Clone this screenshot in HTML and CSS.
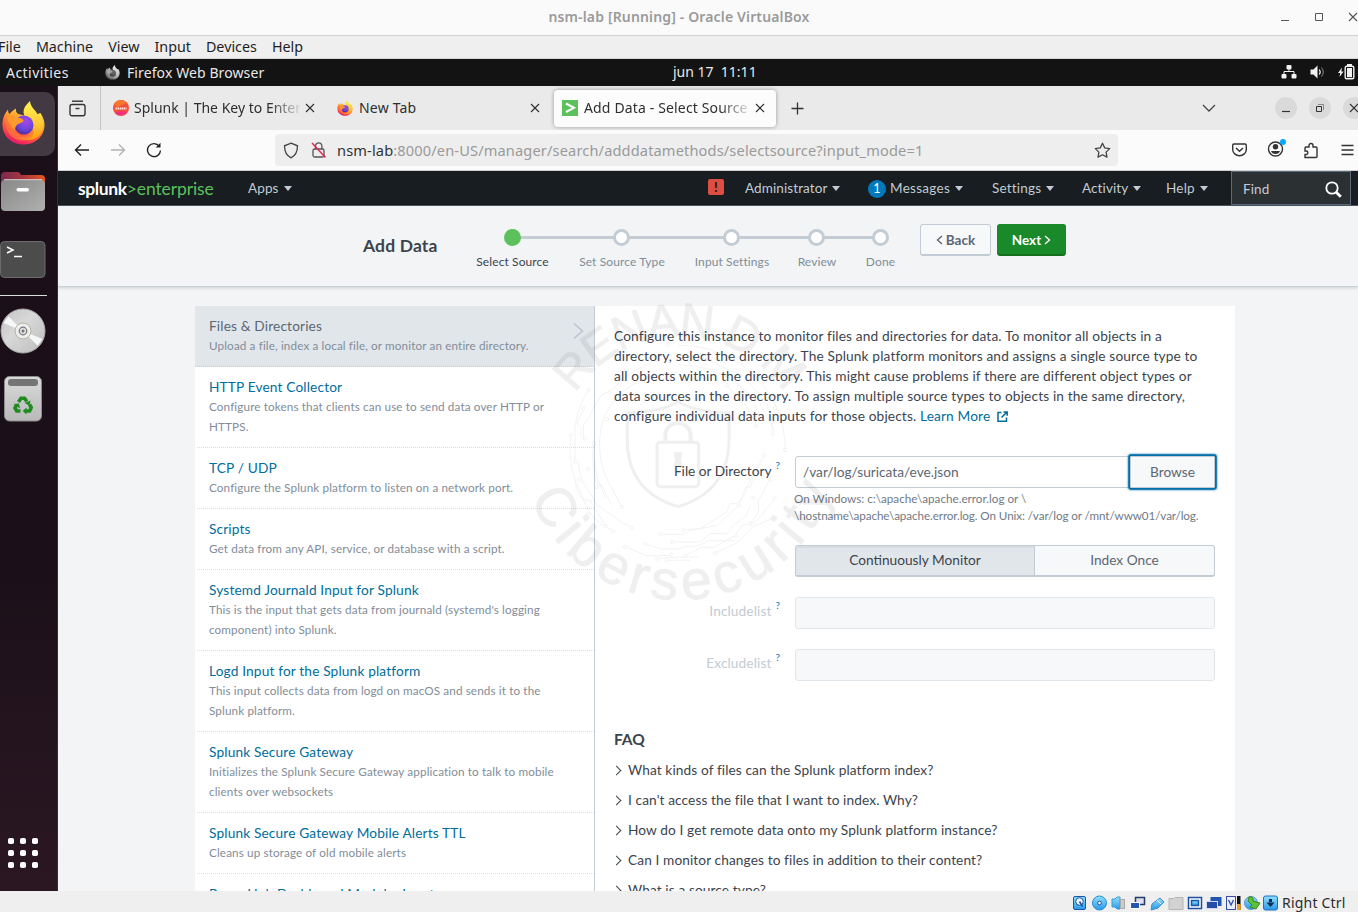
FILE: index.html
```html
<!DOCTYPE html>
<html lang="en">
<head>
<meta charset="utf-8">
<title>nsm-lab [Running] - Oracle VirtualBox</title>
<link rel="stylesheet" href="styles.css">
</head>
<body>
<svg class="defs" width="0" height="0">
  <defs>
    <linearGradient id="fox" x1=".8" y1="0" x2=".3" y2="1"><stop offset="0" stop-color="#fff44f"/><stop offset=".35" stop-color="#ffa72e"/><stop offset=".7" stop-color="#ff5142"/><stop offset="1" stop-color="#e4126f"/></linearGradient>
    <linearGradient id="flame" x1=".5" y1="0" x2=".6" y2="1"><stop offset="0" stop-color="#fff44f"/><stop offset=".6" stop-color="#ffca3a"/><stop offset="1" stop-color="#ff980e"/></linearGradient>
    <radialGradient id="globe" cx=".6" cy=".3" r=".75"><stop offset="0" stop-color="#a548e8"/><stop offset=".6" stop-color="#6b46d8"/><stop offset="1" stop-color="#45299b"/></radialGradient>
    <linearGradient id="metal" x1="0" y1="0" x2="1" y2="1"><stop offset="0" stop-color="#888"/><stop offset="1" stop-color="#b0b0b0"/></linearGradient>
    <linearGradient id="folder" x1="0" y1="0" x2="1" y2="0"><stop offset="0" stop-color="#7b2a50"/><stop offset=".5" stop-color="#a8363f"/><stop offset="1" stop-color="#e9541f"/></linearGradient>
    <linearGradient id="disc" x1="0" y1="0" x2="1" y2="1"><stop offset="0" stop-color="#c4c4c4"/><stop offset=".3" stop-color="#d2d2d2"/><stop offset=".42" stop-color="#d8d8d8"/><stop offset="1" stop-color="#bcbcbc"/></linearGradient>
    <linearGradient id="bin" x1="0" y1="0" x2="0" y2="1"><stop offset="0" stop-color="#dadada"/><stop offset="1" stop-color="#b9b9b9"/></linearGradient>
    <linearGradient id="blu" x1="0" y1="0" x2="0" y2="1"><stop offset="0" stop-color="#8fe0ff"/><stop offset="1" stop-color="#2a98e8"/></linearGradient>
    <symbol id="firefox" viewBox="0 0 42 44">
      <path d="M21 43.500C9 43.500 0 35 0 23.500 0 17 2.500 12 5.500 8.500 5.500 10.500 6 12 7 13 9 10.500 11.500 8.500 13.500 7.500 13 10 14 12.500 16 13L27 16 38 12C41 17 42 20 42 24 42 35 33 43.500 21 43.500Z" fill="url(#fox)"/>
      <path d="M27.500 0C21 6 20 10 22 15 27 17 32 22 30 30 28 36 22 38 16 36 25 43 37 38 40 29 42 20 38 14 36.500 12 36.500 14 36.500 15 36 15.500 34 9 28 7 27.500 0Z" fill="url(#flame)"/>
      <path d="M2 17C7 13 10 17 15 17 18 17 21 17.500 21 20 20 22 16 22 14.500 24 12 27 12 30 16 33 20 36 26 35 31 28 33 38 22 42 13 38 5 34 3 26 2 17Z" fill="#ff7a35" opacity=".75"/>
      <circle cx="21.500" cy="24" r="9.500" fill="url(#globe)"/>
      <path d="M4 16C8 14 11 17 15 17 18 17 21 17.500 21 20 20 22 16 22 14.500 24 13 25.500 12.500 27 12.500 29 8 26 6 21 4 16Z" fill="#ff9a2e"/>
    </symbol>
    <symbol id="x" viewBox="0 0 10 10"><path d="M1 1l8 8M9 1l-8 8" stroke="currentColor" stroke-width="1.100" fill="none"/></symbol>
  </defs>
</svg>

<header class="titlebar">
  <span class="titlebar-text">nsm-lab [Running] - Oracle VirtualBox</span>
  <div class="titlebar-buttons">
    <svg width="10" height="10"><path d="M1 8.500h8" stroke="#555"/></svg>
    <svg width="10" height="10"><path d="M1.500 1.500h7v7h-7z" fill="none" stroke="#555"/></svg>
    <svg class="c555" width="10" height="10"><use href="#x"/></svg>
  </div>
</header>

<nav class="menubar">
  <span>File</span><span>Machine</span><span>View</span><span>Input</span><span>Devices</span><span>Help</span>
</nav>

<div class="gnome-bar">
  <span class="activities">Activities</span>
  <svg class="gray-fox" width="15" height="15"><use href="#firefox"/></svg>
  <span class="app-name">Firefox Web Browser</span>
  <span class="clock">jun 17&nbsp; 11:11</span>
  <div class="tray">
    <svg width="16" height="16" fill="#f2f2f2"><rect x="5.500" y="1" width="5" height="4.500" rx="1"/><rect x=".5" y="10" width="5" height="4.500" rx="1"/><rect x="10.500" y="10" width="5" height="4.500" rx="1"/><path d="M8 5v3M3 10V7.500h10V10" fill="none" stroke="#f2f2f2"/></svg>
    <svg width="15" height="16" fill="#f2f2f2"><path d="M.5 5.500h3L7.500 1.500v13L3.500 10.500h-3z"/><path d="M9.200 5.500q2 2.500 0 5" fill="none" stroke="#f2f2f2" stroke-width="1.200"/><path d="M11.500 3.500q3.500 4.500 0 9" fill="none" stroke="#888"/></svg>
    <svg width="17" height="16" fill="#f2f2f2"><path d="M4 3.500L0 9h2.200L1.500 13 5.500 7.500H3.300z"/><rect x="9" y="0" width="5" height="2"/><rect x="7.200" y="2.200" width="8.600" height="12.600" rx="1.500" fill="none" stroke="#f2f2f2" stroke-width="1.400"/><rect x="9" y="4" width="5" height="9.200"/></svg>
  </div>
</div>

<div class="desktop">
  <aside class="dock">
    <div class="dock-active"><svg width="43" height="44"><use href="#firefox"/></svg></div>
    <svg class="dock-files" width="46" height="42"><path d="M1 6Q1 2 5 2H17Q20 2 21 5H41Q45 5 45 9V20H1z" fill="url(#folder)"/><rect x="1" y="10" width="44" height="31" rx="4" fill="url(#metal)"/><path d="M4 9.700h38" stroke="#d8d8d8"/><rect x="16.500" y="18" width="12.500" height="3.400" rx="1.700" fill="#fff"/></svg>
    <svg class="dock-term" width="46" height="37"><rect x=".5" y=".5" width="44.500" height="36" rx="4" fill="#4c4c4c" stroke="#6b6b6b"/><path d="M7 6l6 3-6 3M14 15.500h8" fill="none" stroke="#fff" stroke-width="1.500"/></svg>
    <div class="dock-rule"></div>
    <svg class="dock-disc" width="46" height="46"><circle cx="23" cy="23" r="22" fill="url(#disc)" stroke="#aaa"/><path d="M23 23L3.500 15 8.500 8.500zM23 23L42.500 31 37.500 37.500z" fill="#fff" opacity=".85"/><circle cx="23" cy="23" r="8" fill="#eee" stroke="#b5b2a2"/><circle cx="23" cy="23" r="3.800" fill="#ddd" stroke="#777" stroke-width="1.200"/><circle cx="23" cy="23" r="1.500" fill="#777"/></svg>
    <svg class="dock-bin" width="38" height="46"><rect x=".5" y=".5" width="37" height="44.500" rx="5" fill="url(#bin)" stroke="#8c8c8c"/><rect x="4" y="3" width="30" height="7" rx="3" fill="#757575"/>
      <g fill="none" stroke="#1f8a1f" stroke-width="3.600"><path d="M14.500 26l2.500-3.800h3.500l2.300 3.300"/><path d="M25.500 28.500l1.700 3-1.600 3.500h-4"/><path d="M16.500 35h-3.800l-1.700-3 1.700-3.200"/></g><g fill="#1f8a1f"><path d="M20.500 27l6-2.500-1 5.200zM22.500 31.500v7l-3.800-3.500zM9.500 28l5.500-.5 1 5z"/></g></svg>
    <svg class="dock-grid" width="30" height="30" fill="#fff"><g id="dots"><rect width="6" height="6" rx="1.800"/><rect x="12" width="6" height="6" rx="1.800"/><rect x="24" width="6" height="6" rx="1.800"/></g><use href="#dots" y="12"/><use href="#dots" y="24"/></svg>
  </aside>

  <main class="browser">
    <div class="tabs">
      <div class="recent"><svg width="17" height="17" fill="none" stroke="#333" stroke-width="1.400"><path d="M3 1.200h11" /><rect x="1" y="4.500" width="15" height="11.300" rx="2"/><path d="M6.500 8.500h4"/></svg></div>
      <div class="tab tab-1">
        <svg width="16" height="16"><circle cx="8" cy="8" r="8" fill="#f2503b"/><path d="M1 4a8 8 0 0 1 13-1L4 7z" fill="#f8772c"/><path d="M2 13a8 8 0 0 0 12-1L8 11z" fill="#ef2f86"/><path d="M2.500 8.500h11" stroke="#ffe3dc" stroke-width="2.200" stroke-dasharray="1.600 .5"/></svg>
        <span class="tab-label fade">Splunk | The Key to Enterprise</span>
        <svg class="close" width="10" height="10"><use href="#x"/></svg>
      </div>
      <div class="tab tab-2">
        <svg width="16" height="16"><use href="#firefox"/></svg>
        <span class="tab-label">New Tab</span>
        <svg class="close" width="10" height="10"><use href="#x"/></svg>
      </div>
      <div class="tab tab-3">
        <svg width="16" height="16"><path d="M0 0h16v16H0z" fill="#5cc05c"/><path d="M4 3.500l8 4.300-8 4.200" stroke="#fff" stroke-width="2" fill="none"/></svg>
        <span class="tab-label fade">Add Data - Select Source |</span>
        <svg class="close" width="10" height="10"><use href="#x"/></svg>
      </div>
      <svg class="plus" width="13" height="13"><path d="M6.500 .5v12M.5 6.500h12" stroke="#333" stroke-width="1.300"/></svg>
      <svg class="alltabs" width="14" height="8"><path d="M1 1l6 6 6-6" fill="none" stroke="#444" stroke-width="1.300"/></svg>
      <div class="winbtns">
        <i><svg width="10" height="10"><path d="M1 8.500h8" stroke="#333" stroke-width="1.200"/></svg></i>
        <i><svg width="10" height="10"><path d="M1.500 3.500h5v5h-5z" fill="none" stroke="#333"/><path d="M3 1.500h5.500V7" fill="none" stroke="#888"/></svg></i>
        <i><svg width="10" height="10"><use href="#x"/></svg></i>
      </div>
    </div>

    <div class="toolbar">
      <svg class="back" width="16" height="14" fill="none" stroke="#222" stroke-width="1.400"><path d="M15 7H1.500M7 1.500L1.500 7 7 12.500"/></svg>
      <svg class="fwd" width="16" height="14" fill="none" stroke="#b3b3b3" stroke-width="1.400"><path d="M1 7h13.500M9 1.500L14.500 7 9 12.500"/></svg>
      <svg class="reload" width="16" height="16" fill="none" stroke="#222" stroke-width="1.400"><path d="M13.300 4.300A6.500 6.500 0 1 0 14.500 8.500"/><path d="M14.500 .8V5.600H9.700z" fill="#222" stroke="none"/></svg>
      <div class="urlbar">
        <svg width="16" height="17" fill="none" stroke="#444" stroke-width="1.300"><path d="M8 1.200l6.500 2.600c0 5.500-1.500 9.700-6.500 12-5-2.300-6.500-6.500-6.500-12z"/></svg>
        <svg class="lock" width="16" height="18" fill="none" stroke="#555" stroke-width="1.300"><rect x="2" y="8" width="11" height="8" rx="1.500"/><path d="M4.500 8V5a3.200 3.200 0 0 1 6.400 0V8"/><path d="M1 2l13.500 14.500" stroke="#e22850" stroke-width="1.500"/></svg>
        <span class="url"><b>nsm-lab</b>:8000/en-US/manager/search/adddatamethods/selectsource?input_mode=1</span>
        <svg class="star" width="17" height="17" fill="none" stroke="#444" stroke-width="1.300" stroke-linejoin="round"><path d="M8.500 1.300l2.200 4.600 5 .7-3.600 3.500.9 5-4.500-2.400-4.500 2.400.9-5L1.300 6.600l5-.7z"/></svg>
      </div>
      <div class="tools">
        <svg width="15" height="14" fill="none" stroke="#333" stroke-width="1.400"><path d="M2 1h11q1.300 0 1.300 1.300v4.200a6.600 6 0 0 1-13.600 0V2.300Q.7 1 2 1z"/><path d="M4 5l3.500 3.300L11 5"/></svg>
        <svg class="account" width="19" height="19"><circle cx="8.500" cy="10" r="7" fill="none" stroke="#333" stroke-width="1.400"/><circle cx="8.500" cy="7.800" r="2.700" fill="#333"/><path d="M4 12h9q-1 3-4.500 3T4 12z" fill="#333"/><circle cx="16" cy="3" r="3" fill="#00a8ff"/></svg>
        <svg class="addons" width="16" height="17" fill="none" stroke="#333" stroke-width="1.400"><path d="M2 9V6q0-1 1-1h3V3.500a2 2 0 0 1 4 0V5h3q1 0 1 1v8.500q0 1-1 1H2v-3h1.500a1.800 1.800 0 0 0 0-3.500z"/></svg>
        <svg class="burger" width="13" height="12"><path d="M.5 1.500h12M.5 6h12M.5 10.500h12" stroke="#333" stroke-width="1.300"/></svg>
      </div>
    </div>

    <div class="splunk-nav">
      <span class="logo"><b>splunk</b><em>&gt;enterprise</em></span>
      <span class="nav-apps">Apps<i class="caret"></i></span>
      <span class="alert">!</span>
      <span class="nav-item n1">Administrator<i class="caret"></i></span>
      <span class="nav-item n2"><i class="count">1</i>Messages<i class="caret"></i></span>
      <span class="nav-item n3">Settings<i class="caret"></i></span>
      <span class="nav-item n4">Activity<i class="caret"></i></span>
      <span class="nav-item n5">Help<i class="caret"></i></span>
      <div class="find">Find<svg width="17" height="17" fill="none" stroke="#fff"><circle cx="7" cy="7" r="5.700" stroke-width="1.800"/><path d="M11 11l4.800 4.800" stroke-width="2.800"/></svg></div>
    </div>

    <section class="wizard">
      <h1>Add Data</h1>
      <ol class="steps">
        <li class="done"><i></i>Select Source</li>
        <li><i></i>Set Source Type</li>
        <li><i></i>Input Settings</li>
        <li><i></i>Review</li>
        <li><i></i>Done</li>
      </ol>
      <button class="btn btn-back"><svg width="7" height="10"><path d="M6 1L1.500 5 6 9" fill="none" stroke="currentColor" stroke-width="1.400"/></svg>Back</button>
      <button class="btn btn-next">Next<svg width="7" height="10"><path d="M1 1l4.500 4L1 9" fill="none" stroke="currentColor" stroke-width="1.400"/></svg></button>
    </section>

    <section class="content">
      <ul class="sources">
        <li class="selected"><a>Files &amp; Directories</a><p>Upload a file, index a local file, or monitor an entire directory.</p><svg width="11" height="18"><path d="M1 1.500L9.500 9 1 16.500" fill="none" stroke="#b9c3ce" stroke-width="1.500"/></svg></li>
        <li><a>HTTP Event Collector</a><p>Configure tokens that clients can use to send data over HTTP or<br>HTTPS.</p></li>
        <li><a>TCP / UDP</a><p>Configure the Splunk platform to listen on a network port.</p></li>
        <li><a>Scripts</a><p>Get data from any API, service, or database with a script.</p></li>
        <li><a>Systemd Journald Input for Splunk</a><p>This is the input that gets data from journald (systemd's logging<br>component) into Splunk.</p></li>
        <li><a>Logd Input for the Splunk platform</a><p>This input collects data from logd on macOS and sends it to the<br>Splunk platform.</p></li>
        <li><a>Splunk Secure Gateway</a><p>Initializes the Splunk Secure Gateway application to talk to mobile<br>clients over websockets</p></li>
        <li><a>Splunk Secure Gateway Mobile Alerts TTL</a><p>Cleans up storage of old mobile alerts</p></li>
        <li><a>Beam Hub Dashboard Modular Input</a></li>
      </ul>
      <div class="panel">
        <p class="intro">Configure this instance to monitor files and directories for data. To monitor all objects in a<br>directory, select the directory. The Splunk platform monitors and assigns a single source type to<br>all objects within the directory. This might cause problems if there are different object types or<br>data sources in the directory. To assign multiple source types to objects in the same directory,<br>configure individual data inputs for those objects. <a>Learn More <svg width="11" height="11" fill="none" stroke="currentColor" stroke-width="1.500"><path d="M4.500 1.500H1v8.700h8.500V6.500M6.500 1h3.700v3.700M10 1L4.500 6.500"/></svg></a></p>
        <div class="row row-file">
          <label>File or Directory<sup>?</sup></label>
          <div class="field"><span class="input">/var/log/suricata/eve.json</span><span class="browse">Browse</span></div>
        </div>
        <p class="hint">On Windows: c:\apache\apache.error.log or \<br><span>\hostname\apache\apache.error.log. On Unix: /var/log or /mnt/www01/var/log.</span></p>
        <div class="toggle"><span class="on">Continuously Monitor</span><span>Index Once</span></div>
        <div class="row row-off"><label>Includelist<sup>?</sup></label><div class="field off"></div></div>
        <div class="row row-off"><label>Excludelist<sup>?</sup></label><div class="field off"></div></div>
        <h2>FAQ</h2>
        <ul class="faq">
          <li>What kinds of files can the Splunk platform index?</li>
          <li>I can't access the file that I want to index. Why?</li>
          <li>How do I get remote data onto my Splunk platform instance?</li>
          <li>Can I monitor changes to files in addition to their content?</li>
          <li>What is a source type?</li>
        </ul>
      </div>
    </section>
  </main>
</div>

<footer class="statusbar">
  <svg width="191" height="18">
    <g stroke="#1c55a5" fill="url(#blu)">
      <rect x="1.500" y="2.500" width="12" height="13" rx="1.500"/><circle cx="7.500" cy="7.500" r="3.800" fill="#eaf6ff"/><path d="M7.500 7.500l3 5" fill="none" stroke-width="1.500"/>
      <circle cx="27.500" cy="9" r="7" stroke="#2b8ed3"/><circle cx="27.500" cy="9" r="1.800" fill="#fff"/>
      <path d="M40 5h3l2-2h3v12h-3l-2-2h-3z" stroke="#3a9ad6"/><rect x="48.500" y="5.500" width="4" height="9" fill="#ccc" stroke="#aaa"/>
      <rect x="63.500" y="3.500" width="9" height="7" fill="#dde" stroke="#223a66" stroke-width="1.500"/><rect x="58.500" y="8.500" width="9" height="6" fill="#2457ae" stroke="#fff"/>
      <path d="M79 16l1-6 8-6 4 4-6 6z" stroke="#4388c8"/><path d="M85 6l4 4" stroke="#fff"/>
      <path d="M97 4.500h5l1-1h8v12H97z" fill="#d2d2d2" stroke="#b5b5b5"/>
      <rect x="116.500" y="3.500" width="13" height="11" fill="#fff" stroke="#1c4fa0" stroke-width="1.500"/><rect x="119.500" y="6.500" width="7" height="5" stroke-width="1.500"/>
      <rect x="139" y="3.500" width="10" height="8" fill="#2456b5"/><rect x="134.500" y="7.500" width="11" height="7" fill="#244fa8" stroke="#d0d8ee"/>
      <rect x="154.500" y="2.500" width="9" height="13" fill="#eef" stroke="#334fa8"/><path d="M156.500 6l2.500 5 2.500-5" fill="none" stroke="#334fa8" stroke-width="1.400"/>
      <path d="M165 2h3.500v14h-3.500z" fill="#111" stroke="none"/><path d="M165 10h3.500v6h-3.500z" fill="#f59a1c" stroke="none"/>
      <circle cx="179" cy="9" r="6.500" stroke="#5d93c4"/><path d="M177 3q5-1 4 4l3 1 4 1-4 6-6-2 2-2-4-4z" fill="#5bc236" stroke="#39861f"/>
    </g>
  </svg>
  <svg width="15" height="18"><rect x=".5" y="2" width="14" height="14" rx="2" fill="url(#blu)" stroke="#1d6fc0"/><path d="M7.500 5v3" stroke="#0b2a55" stroke-width="3"/><path d="M3.500 8.500h8l-4 4.500z" fill="#0b2a55"/></svg>
  <span>Right Ctrl</span>
</footer>

<svg class="watermark" width="330" height="320" viewBox="0 0 990 960">
  <defs>
    <path id="arc-top" d="M166 296A374 374 0 0 1 794 296L830 350"/>
    <path id="arc-bottom" d="M32 607A480 480 0 0 0 939 575"/>
  </defs>
  <text class="wm-top"><textPath href="#arc-top" textLength="742">RENAN D M</textPath></text>
  <text class="wm-bottom"><textPath href="#arc-bottom" textLength="1180">Cibersecurity</textPath></text>
  <g fill="none" stroke="#000">
    <g stroke-width="9">
      <path d="M474 320Q420 352 322 353V440Q325 590 474 635 623 590 627 440V353Q528 352 474 320Z"/>
      <rect x="411" y="442" width="125" height="133" rx="10"/>
      <path d="M436 440V422a38 38 0 0 1 76 0V440" stroke-width="12"/>
      <path d="M466 476h16l-4 20 4 14h-16l4-14z" fill="#000"/>
    </g>
    <g stroke-width="2.500">
      <path d="M475 150Q580 150 665 210l40 35q90 90 90 215"/><path d="M152 427Q140 520 185 600q20 60 60 90l35 17"/>
      <path d="M475 182Q550 180 620 222l50 20 70 85q20 45 17 85"/><path d="M205 285Q170 340 165 400v95"/>
      <path d="M475 210Q560 208 640 255l60 60 15 50"/><path d="M470 232Q310 240 250 370q-30 110 20 200l35 65"/>
      <path d="M420 190l-45 22q-60 25-95 70l-35 18-20 30q-20 45-35 60v40"/><path d="M190 345l-20 40 15 15-5 25"/>
      <path d="M175 500q5 65 40 100l15 30 80 55 25 12"/><path d="M165 555q5 50 30 60h15l45 75"/>
      <path d="M220 445q-5 80 10 120l15 5 30 60"/><path d="M222 490l10 60 25 60"/>
      <path d="M320 757l60 25h65l10-7"/><path d="M375 747l50 15h50l20-7q50 0 70-18h80"/>
      <path d="M422 718h70l20-12 80-15 65-60 20-55h15l13-50"/><path d="M460 741h80l30-25h50l20-25 40-30 10-30"/>
      <path d="M490 704l50-3 80-50 10-25h20l22-24 25-60 36-60"/><path d="M495 782l50-25h35l65-35 20-30 40-10 60-70"/>
      <path d="M415 791l60-5h60M440 796h70"/><path d="M585 774l65-30 50-50 50-20"/><path d="M690 687l25-35v-35l30-55"/>
      <path d="M620 270l60 65 30 55"/><path d="M650 265l70 60 45 85"/>
    </g>
    <g stroke-width="2.500" fill="#fff">
      <circle cx="152" cy="421" r="5"/><circle cx="166" cy="500" r="5"/><circle cx="190" cy="340" r="5"/><circle cx="207" cy="284" r="5"/><circle cx="194" cy="430" r="5"/><circle cx="222" cy="446" r="5"/><circle cx="203" cy="522" r="5"/><circle cx="176" cy="555" r="5"/><circle cx="231" cy="576" r="5"/><circle cx="261" cy="372" r="5"/><circle cx="306" cy="636" r="5"/><circle cx="335" cy="698" r="5"/><circle cx="279" cy="710" r="5"/><circle cx="258" cy="694" r="5"/><circle cx="205" cy="657" r="5"/><circle cx="315" cy="756" r="5"/><circle cx="376" cy="747" r="5"/><circle cx="421" cy="718" r="5"/><circle cx="457" cy="741" r="5"/><circle cx="490" cy="705" r="5"/><circle cx="453" cy="779" r="5"/><circle cx="412" cy="791" r="5"/><circle cx="440" cy="795" r="5"/><circle cx="495" cy="782" r="5"/><circle cx="586" cy="775" r="5"/><circle cx="648" cy="722" r="5"/><circle cx="690" cy="687" r="5"/><circle cx="656" cy="631" r="5"/><circle cx="700" cy="608" r="5"/><circle cx="764" cy="610" r="5"/><circle cx="733" cy="479" r="5"/><circle cx="750" cy="554" r="5"/><circle cx="795" cy="465" r="5"/><circle cx="758" cy="418" r="5"/><circle cx="709" cy="393" r="5"/><circle cx="765" cy="340" r="5"/><circle cx="620" cy="270" r="5"/><circle cx="445" cy="148" r="5"/>
    </g>
  </g>
</svg>
</body>
</html>
```
FILE: styles.css
```css
* { box-sizing: border-box; }
body { margin: 0; width: 1358px; height: 912px; overflow: hidden; position: relative; background: #efefef; font-family: "Noto Sans", sans-serif; white-space: nowrap; }
ul, ol, p, h1, h2 { margin: 0; padding: 0; list-style: none; }
svg { display: block; flex: none; }
i, em { font-style: normal; }
.defs { position: absolute; }

.titlebar { height: 36px; background: #fafafa; border-bottom: 1px solid #d2d2d2; display: flex; align-items: center; justify-content: center; position: relative; }
.titlebar-text { font-size: 14px; font-weight: 600; color: #9a9a9a; line-height: 34px; padding-bottom: 1px; letter-spacing: .15px; }
.titlebar-buttons { position: absolute; right: 0; top: 12px; display: flex; gap: 24px; }
.c555 { color: #555; }

.menubar { height: 23px; background: #efefef; border-bottom: 1px solid #d6d6d6; display: flex; gap: 15px; font-size: 14.300px; line-height: 22px; color: #1e1e1e; margin-left: -2px; }

.gnome-bar { height: 27px; background: #131313; color: #e8e8e8; font-size: 14px; line-height: 27px; display: flex; align-items: center; position: relative; }
.activities { width: 105px; padding-left: 6px; letter-spacing: .45px; }
.app-name { letter-spacing: .1px; }
.gray-fox { filter: grayscale(1); margin-right: 7px; }
.clock { position: absolute; left: 673px; top: -1px; }
.tray { position: absolute; right: 3px; top: 5px; display: flex; gap: 13px; }

.desktop { display: flex; height: 805px; }
.dock { width: 58px; flex: none; background: linear-gradient(#1a0f18, #1b1019 60%, #2b1722); border-right: 1px solid #3a2b36; padding-top: 6px; }
.dock-active { width: 55px; height: 64px; border-radius: 0 10px 10px 0; background: #433943; padding: 9px 0 0 1.500px; }
.dock-files { margin: 14px 0 0; }
.dock-term { margin: 29px 0 0; }
.dock-rule { width: 47px; height: 1px; background: #dcdcdc; margin: 17px 0 12px; }
.dock-bin { margin: 22px 0 0 4px; }
.dock-grid { margin: 416px 0 0 8px; }

.browser { width: 1300px; flex: none; display: flex; flex-direction: column; overflow: hidden; background: #f2f4f5; }
.tabs { height: 44px; flex: none; background: #eaeaea; display: flex; align-items: center; color: #2f2f2f; font-size: 14px; }
.recent { width: 43px; height: 44px; flex: none; border-right: 1px solid #c6c6c6; display: grid; place-items: center; padding-right: 3px; }
.tab { width: 222px; height: 37px; flex: none; display: flex; align-items: center; border-radius: 4px; padding-left: 8px; margin-left: 3px; }
.tab-1 { padding-left: 9px; }
.tab-3 { background: #fcfcfc; box-shadow: 0 0 4px rgba(0,0,0,.35); }
.tab-label { width: 166px; margin: 0 5px 0 6px; overflow: hidden; line-height: 24px; flex: none; }
.tab-1 .tab-label { margin-left: 5px; }
.tab-2 .tab-label { width: 161px; margin-right: 10px; letter-spacing: .2px; }
.tab-3 .tab-label { letter-spacing: .15px; }
.fade { -webkit-mask-image: linear-gradient(90deg, #000 82%, rgba(0,0,0,.1)); mask-image: linear-gradient(90deg, #000 82%, rgba(0,0,0,.1)); }
.plus { margin-left: 15px; }
.alltabs { margin-left: 398px; }
.winbtns { display: flex; gap: 12px; margin-left: 59px; }
.winbtns i { width: 22px; height: 22px; border-radius: 50%; background: #dadada; display: grid; place-items: center; flex: none; }

.toolbar { height: 41px; flex: none; background: #fbfbfb; border-bottom: 1px solid #cfcfcf; display: flex; align-items: center; padding-left: 16px; }
.fwd { margin-left: 20px; }
.reload { margin-left: 20px; }
.urlbar { margin-left: 113px; width: 843px; height: 32px; flex: none; border-radius: 4px; background: #eeeeee; display: flex; align-items: center; padding-left: 8px; }
.lock { margin-left: 12px; }
.url { margin-left: 10px; width: 757px; flex: none; font-size: 14.600px; letter-spacing: .14px; color: #9a9a9a; }
.url b { font-weight: 400; color: #333; }
.tools { margin-left: 114px; display: flex; align-items: center; flex: none; }
.account { margin: -3px 0 0 20px; }
.addons { margin-left: 17px; }
.burger { margin-left: 22px; }

.splunk-nav { height: 35px; flex: none; background: #171d21; border-bottom: 1px solid #4b555f; display: flex; align-items: center; padding-left: 20px; font: 13.500px/34px Lato, sans-serif; letter-spacing: .1px; color: #c3cbd4; }
.logo { width: 170px; font-size: 17.500px; letter-spacing: -.1px; line-height: 33px; }
.logo b { font-weight: 700; color: #fff; letter-spacing: -.4px; }
.logo em { color: #5cc05c; }
.caret { display: inline-block; border: 4px solid transparent; border-top: 5px solid #c3cbd4; border-bottom: 0; margin: 0 0 2px 5px; }
.nav-apps { width: 460px; }
.alert { width: 16px; height: 16px; background: #dc4e41; border-radius: 2px; color: #2b1512; font-weight: 900; font-size: 13px; line-height: 16px; text-align: center; margin: -2px 21px 0 0; }
.n1 { width: 123px; }
.n2 { width: 124px; letter-spacing: .3px; }
.n3 { width: 90px; }
.n4 { width: 84px; }
.n5 { width: 65px; }
.n3, .n5 { letter-spacing: .2px; }
.count { display: inline-block; width: 18px; height: 18px; border-radius: 50%; background: #007abd; color: #fff; line-height: 18px; text-align: center; font-size: 12.500px; margin-right: 4px; }
.find { width: 120px; height: 34px; background: #2b3033; border: 1px solid #5a6a7d; display: flex; align-items: center; justify-content: space-between; padding: 2px 8px 0 11px; line-height: 30px; }

.wizard { height: 81px; flex: none; background: #f2f4f5; border-bottom: 1px solid #c9d1d9; box-shadow: 0 1px 3px rgba(0,0,0,.15); display: flex; font-family: Lato, sans-serif; padding-left: 305px; z-index: 1; }
.wizard h1 { width: 101px; font-size: 17.500px; font-weight: 700; line-height: 80px; color: #3c444d; letter-spacing: .15px; }
.steps { display: flex; margin-top: 23px; font-size: 12px; line-height: 16px; color: #818d99; width: 455px; letter-spacing: .1px; }
.steps li { text-align: center; position: relative; padding-top: 25px; }
.steps li:nth-child(1) { width: 97px; }
.steps li:nth-child(2) { width: 122px; }
.steps li:nth-child(3) { width: 98px; }
.steps li:nth-child(4) { width: 72px; }
.steps li:nth-child(5) { width: 55px; }
.steps li::before { content: ""; position: absolute; top: 7px; left: 0; right: 0; height: 3px; background: #c3cbd4; }
.steps li:first-child::before { left: 50%; }
.steps li:last-child::before { right: 50%; }
.steps i { position: absolute; top: 0; left: 50%; margin-left: -9px; width: 17px; height: 17px; border-radius: 50%; background: #fff; border: 3px solid #c3cbd4; }
.steps .done { color: #3c444d; }
.steps .done i { background: #5cc05c; border-color: #5cc05c; }
.btn { height: 32px; margin: 18px 0 0; border-radius: 3px; font: 700 13.500px/28px Lato, sans-serif; display: flex; align-items: center; justify-content: center; gap: 3px; padding: 0; }
.btn-back { width: 71px; margin-left: 1px; background: #f7f8fa; border: 1px solid #c3cbd4; border-bottom-width: 2px; color: #5c6773; }
.btn-next { width: 69px; margin-left: 6px; background: #1a8929; border: 1px solid #1a8929; border-bottom: 2px solid #14701f; color: #fff; }

.content { display: flex; margin: 19px 0 0 137px; width: 1040px; flex: none; font-family: Lato, sans-serif; background: #fff; }
.sources { width: 400px; border-right: 1px solid #c3cbd4; flex: none; }
.sources li { padding: 10px 14px 10px 12px; border-bottom: 1px dotted #dcdfe2; line-height: 20px; font-size: 11.700px; letter-spacing: .13px; color: #818d99; margin-left: 2px; position: relative; }
.sources a { display: block; font-size: 13.700px; letter-spacing: .15px; color: #006d9c; }
.sources p { margin: -1px 0 1px; }
.sources .selected { background: #e1e6eb; margin-left: 0; padding-left: 14px; border-color: #c9ced3; }
.sources .selected a { color: #5c6773; }
.selected svg { position: absolute; left: 378px; top: 16px; }
.panel { padding: 20px 20px 0 19px; width: 640px; color: #3c444d; font-size: 13.700px; }
.intro { line-height: 20px; height: 130px; letter-spacing: .14px; }
.intro a { color: #006d9c; }
.intro svg { display: inline-block; margin-left: 3px; vertical-align: -1px; }
.row { display: flex; align-items: center; }
.row label { width: 181px; padding: 0 15px 2px 0; text-align: right; line-height: 30px; }
.row sup { color: #007abd; font-size: 10px; line-height: 0; margin-left: 4px; vertical-align: 7px; }
.field { width: 420px; height: 32px; display: flex; }
.input { width: 335px; flex: none; border: 1px solid #c3cbd4; border-radius: 3px 0 0 3px; line-height: 29px; padding-left: 7px; color: #5c6773; }
.browse { width: 85px; background: #f7f8fa; border: 1px solid #c3cbd4; line-height: 29px; text-align: center; color: #5c6773; box-shadow: 0 0 2px 2px #006eaa, 0 0 0 1.500px #006eaa; border-radius: 1px; }
.hint { margin: 2px 0 0 180px; font-size: 11.700px; line-height: 17px; color: #6f7b87; height: 55px; }
.hint span { letter-spacing: -.1px; }
.toggle { margin: 0 0 20px 181px; width: 420px; height: 32px; display: flex; border: 1px solid #c3cbd4; border-radius: 3px; border-bottom-width: 2px; line-height: 28px; text-align: center; background: #f7f8fa; color: #5c6773; }
.toggle span { flex: 1; }
.toggle .on { flex: none; width: 239px; background: #e1e6ea; border-right: 1px solid #c3cbd4; color: #3c444d; box-shadow: inset 0 2px 1px #d5dce3; }
.row-off { margin-bottom: 20px; color: #c3cbd4; }
.row-off label { line-height: 28px; padding-bottom: 4px; letter-spacing: .1px; }
.off { background: #f7f8fa; border: 1px solid #e1e6eb; border-radius: 3px; }
.panel h2 { font-size: 15.500px; line-height: 24px; margin-top: 46px; font-weight: 700; }
.faq { margin-top: 4px; line-height: 30px; letter-spacing: .1px; }
.faq li { display: flex; align-items: center; margin-left: -1px; }
.faq li::before { content: ""; width: 6px; height: 6px; border: solid #3c444d; border-width: 1.500px 1.500px 0 0; transform: rotate(45deg); margin-right: 8px; }

.statusbar { height: 21px; background: #efefef; display: flex; align-items: center; padding: 2px 0 0 1072px; font-size: 14px; line-height: 21px; color: #2c2c2c; letter-spacing: .2px; }
.statusbar span { margin-left: 4px; }

.watermark { position: absolute; left: 520px; top: 295px; opacity: .06; pointer-events: none; z-index: 5; }
.watermark text { font-family: "Liberation Sans", sans-serif; stroke: #000; stroke-width: 3px; }
.wm-top { font-size: 142px; }
.wm-bottom { font-size: 166px; }
```
